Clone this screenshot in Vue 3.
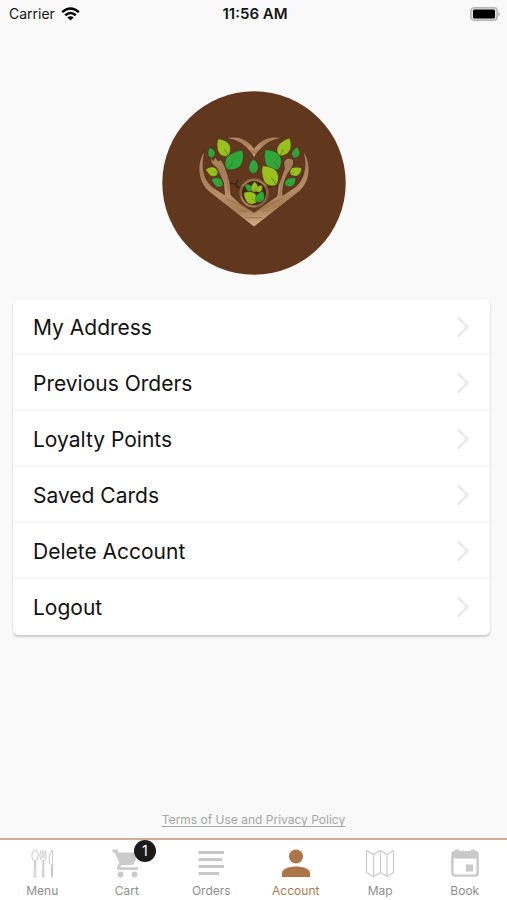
<script setup>
const rows = ['My Address', 'Previous Orders', 'Loyalty Points', 'Saved Cards', 'Delete Account', 'Logout']

const tabs = [
  { id: 'menu', label: 'Menu' },
  { id: 'cart', label: 'Cart', badge: 1 },
  { id: 'orders', label: 'Orders' },
  { id: 'account', label: 'Account', active: true },
  { id: 'map', label: 'Map' },
  { id: 'book', label: 'Book' },
]

// Leaf centre, rotation in degrees, width and height, colour
const lime = '#98c11d'
const green = '#2fa63a'
const leaves = [
  { x: 100, y: 67, r: -28, w: 38, h: 60, c: lime },
  { x: 64, y: 83, r: -15, w: 20, h: 31, c: green },
  { x: 135, y: 105, r: 42, w: 46, h: 74, c: green },
  { x: 66, y: 139, r: -68, w: 26, h: 39, c: lime },
  { x: 82, y: 171, r: -58, w: 24, h: 38, c: green },
  { x: 191, y: 124, r: 2, w: 27, h: 44, c: green },
  { x: 247, y: 103, r: -34, w: 48, h: 72, c: green },
  { x: 284, y: 66, r: 32, w: 36, h: 62, c: lime },
  { x: 318, y: 83, r: 15, w: 22, h: 33, c: green },
  { x: 239, y: 151, r: -34, w: 46, h: 72, c: lime },
  { x: 318, y: 139, r: 68, w: 26, h: 39, c: lime },
  { x: 302, y: 171, r: 58, w: 24, h: 38, c: green },
  { x: 176, y: 188, r: -45, w: 17, h: 29, c: green },
  { x: 194, y: 186, r: 2, w: 20, h: 32, c: lime },
  { x: 208, y: 191, r: 48, w: 17, h: 25, c: lime },
  { x: 181, y: 217, r: -50, w: 34, h: 48, c: lime },
  { x: 211, y: 216, r: 28, w: 24, h: 37, c: green },
]
const leafTransform = (l) => `translate(${l.x} ${l.y}) rotate(${l.r}) scale(${l.w / 20} ${l.h / 40})`
</script>

<template>
  <div class="page">
    <header class="status">
      <div class="carrier">
        <span>Carrier</span>
        <svg width="19" height="14" viewBox="0 0 19 14" aria-hidden="true">
          <g fill="none" stroke="#000" stroke-width="2.5">
            <path d="M1.2 5.1Q9.5-2.2 17.8 5.1" />
            <path d="M4.2 8.2Q9.5 3.7 14.8 8.2" />
          </g>
          <path d="M6.4 10.4Q9.5 8 12.6 10.4L9.5 13.6Z" />
        </svg>
      </div>
      <time class="clock">11:56 AM</time>
      <svg class="battery" width="31" height="14" viewBox="0 0 31 14" aria-hidden="true">
        <rect x="0.8" y="0.8" width="26.4" height="12.4" rx="3.2" fill="#dedede" stroke="#b4b4b4" stroke-width="1.4" />
        <rect x="3" y="2.5" width="22" height="9" rx="1.5" />
        <path d="M28.5 4.5Q31 7 28.5 9.5Z" fill="#aaa" />
      </svg>
    </header>

    <main class="content">
      <svg class="logo" viewBox="0 0 184 184" role="img" aria-label="Restaurant logo">
        <defs>
          <linearGradient id="wood" x1="0" y1="0" x2="0.15" y2="1">
            <stop offset="0" stop-color="#b98f6a" />
            <stop offset="0.3" stop-color="#a57c58" />
            <stop offset="0.6" stop-color="#b98e66" />
            <stop offset="0.82" stop-color="#a87e57" />
            <stop offset="1" stop-color="#cda77d" />
          </linearGradient>
        </defs>
        <circle cx="92" cy="92" r="91.7" fill="#61371e" />
        <g transform="translate(28 34) scale(0.3333)">
          <g fill="none" stroke="#3e2212" stroke-width="4" stroke-linecap="round">
            <path d="M158 188Q142 190 136 178L119 174M138 179L143 164M232 186Q249 187 256 170M249 180L265 184M213 174L218 162" />
          </g>
          <g fill="url(#wood)" stroke="#4a2a17" stroke-width="2" stroke-linejoin="round">
            <path d="M108 40C142 29 174 43 192 70C211 43 243 29 277 40C245 43 216 59 192 98C170 59 140 44 108 40Z" />
            <path d="M45 77C17 112 21 171 58 201L192 306L326 201C363 171 367 112 339 77C351 121 344 164 315 187L278 211C277 182 285 155 304 130C315 116 312 100 298 100C283 100 278 115 284 130L265 181L261 213L192 262L151 236L123 210L119 169L104 122L92 104L84 108L75 96L70 108L61 96Q62 119 80 128L100 172L104 209L69 187C39 164 33 121 45 77Z" />
          </g>
          <circle cx="192" cy="204" r="40" fill="#412412" stroke="#83603f" stroke-width="8" />
          <path d="M157 184Q192 147 228 184M153 213Q163 249 199 244" fill="none" stroke="#aa8058" stroke-width="4" />
          <g fill="none" stroke="#8c653f" stroke-width="2">
            <path d="M109 222Q155 240 192 264Q235 240 275 222M144 258H170M218 258H238M165 278H217M112 155L116 203M276 158L270 211" />
          </g>
          <g v-for="(leaf, i) in leaves" :key="i" :transform="leafTransform(leaf)">
            <path d="M-1-20C8-12 15 1 7 13Q4 18 0 20C-8 17-13 8-9-4Q-7-13-1-20Z" :fill="leaf.c" stroke="#452a16" stroke-width="0.8" />
            <path d="M0 5Q1 11 0 21" fill="none" stroke="#3d5c1c" stroke-width="0.9" />
          </g>
        </g>
      </svg>

      <nav class="card" aria-label="Account options">
        <a v-for="row in rows" :key="row" class="row" href="#">
          <span>{{ row }}</span>
          <svg width="14" height="24" viewBox="0 0 14 24" aria-hidden="true">
            <path d="M2 2.5L11.5 12L2 21.5" fill="none" stroke="#e9e9e9" stroke-width="2.4" />
          </svg>
        </a>
      </nav>

      <a class="terms" href="#">Terms of Use and Privacy Policy</a>
    </main>

    <nav class="tabs" aria-label="Main">
      <a v-for="tab in tabs" :key="tab.id" class="tab" :class="{ active: tab.active }" :aria-current="tab.active ? 'page' : null" href="#">
        <span class="icon">
          <svg width="32" height="32" viewBox="0 0 32 32" aria-hidden="true">
            <g v-if="tab.id === 'menu'" fill="none" stroke="#c9c9c9" stroke-width="1">
              <ellipse cx="9" cy="8.5" rx="3.1" ry="5.6" />
              <path d="M8.5 14L8 30H10L9.5 14M14.500 3.500Q13 10 15 12.500L17 14L19 12.500Q21 10 19.500 3.500M16.200 3.500V11M18 3.500V11M17 14L16.500 30H18L17.500 14M26.500 3V30H25.500V18L23.500 16Q22 8 26.500 3" />
            </g>
            <g v-else-if="tab.id === 'cart'" fill="#cbcbcb">
              <path d="M1.5 2.5H6.2L7.6 5.5H28L23 16.5Q22.2 18 20.6 18H10.5L9.2 20.2H27V23H8.5Q4.5 22.7 6.5 18.8L8.4 15.5L3.4 5.2H1.5Z" />
              <circle cx="9.5" cy="27.5" r="2.9" />
              <circle cx="23.5" cy="27.5" r="2.9" />
            </g>
            <path v-else-if="tab.id === 'orders'" d="M3.5 5.5H29M3.5 12.5H27M3.5 19.5H29M3.5 26.5H24" fill="none" stroke="#c8c8c8" stroke-width="3" />
            <g v-else-if="tab.id === 'account'" fill="#ad7548">
              <circle cx="16" cy="9.5" r="7" />
              <path d="M2 30V26C2 21.5 10 19.5 16 19.5S30 21.5 30 26V30Z" />
            </g>
            <path v-else-if="tab.id === 'map'" d="M2.5 3.5L9.5 7.5L16.5 3.5L23 7.5L29.5 3.5V25.5L23 29.5L16.5 25.5L9.5 29.5L2.5 25.5ZM9.5 7.5V29.5M16.5 3.5V25.5M23 7.5V29.5" fill="none" stroke="#cbcbcb" stroke-width="1.2" />
            <g v-else>
              <rect x="3.4" y="5.4" width="25.2" height="23.2" rx="2" fill="none" stroke="#c9c9c9" stroke-width="2.4" />
              <path d="M3 11.5V7Q3 4 6 4V2.5H10V4H22V2.5H26V4Q29 4 29 7V11.5ZM17 17.5H24V24.5H17Z" fill="#c9c9c9" />
            </g>
          </svg>
          <span v-if="tab.badge" class="badge">{{ tab.badge }}</span>
        </span>
        <span>{{ tab.label }}</span>
      </a>
    </nav>
  </div>
</template>

<style>
body {
  margin: 0;
  background: #f9f9f9;
}
</style>

<style scoped>
.page {
  display: flex;
  flex-direction: column;
  min-height: 100vh;
  font-family: Inter, "Liberation Sans", sans-serif;
  color: #151515;
}

a {
  color: inherit;
  text-decoration: none;
}

svg {
  display: block;
}

.status {
  display: grid;
  grid-template-columns: 1fr auto 1fr;
  align-items: center;
  height: 27px;
  padding: 0 6px 0 9px;
  font-size: 14px;
}

.carrier {
  display: flex;
  align-items: center;
  gap: 6px;
}

.clock {
  font-size: 15px;
  font-weight: 600;
}

.battery {
  justify-self: end;
}

.content {
  display: flex;
  flex: 1;
  flex-direction: column;
  align-items: center;
  padding: 64px 0 9px;
}

.logo {
  width: 184px;
  height: 184px;
}

.card {
  align-self: stretch;
  margin: 24px 17px 0 13px;
  border-radius: 5px;
  background: #fff;
  box-shadow: 0 2px 2px rgba(0, 0, 0, 0.18), 0 0 2px rgba(0, 0, 0, 0.08);
}

.row {
  display: flex;
  align-items: center;
  justify-content: space-between;
  box-sizing: border-box;
  height: 56px;
  padding: 2px 20px 0;
  border-bottom: 2px solid #f5f5f5;
  font-size: 21px;
  color: #111;
}

.row:last-child {
  border-bottom-color: transparent;
}

.terms {
  margin-top: auto;
  font-size: 12px;
  line-height: 18px;
  color: #a6a6a6;
  text-decoration: underline;
  text-underline-offset: 2px;
}

.tabs {
  display: grid;
  grid-template-columns: repeat(6, 1fr);
  height: 60px;
  border-top: 2px solid #d2ab9b;
  background: #fff;
}

.tab {
  display: flex;
  flex-direction: column;
  align-items: center;
  gap: 4px;
  padding-top: 7px;
  font-size: 12px;
  line-height: 16px;
  color: #8e8e8e;
}

.tab.active {
  color: #b07a50;
}

.icon {
  position: relative;
}

.badge {
  position: absolute;
  top: -7px;
  right: -13px;
  width: 22px;
  border-radius: 50%;
  background: #1b1b1b;
  color: #fff;
  font-size: 14px;
  line-height: 22px;
  text-align: center;
}
</style>
